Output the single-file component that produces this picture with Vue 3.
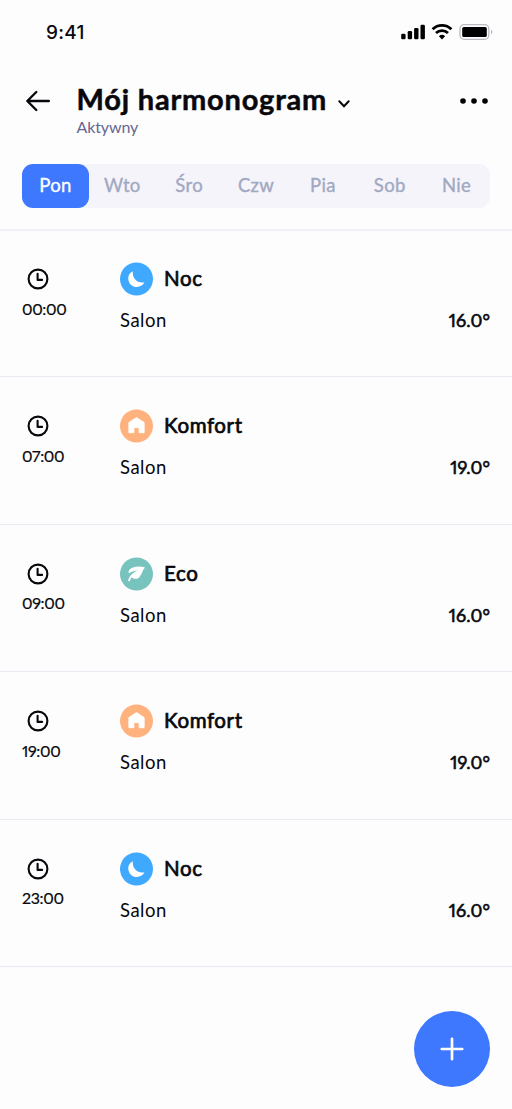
<script setup>
const days = ['Pon', 'Wto', 'Śro', 'Czw', 'Pia', 'Sob', 'Nie']
const entries = [
  { time: '00:00', mode: 'Noc', kind: 'night', temp: '16.0°' },
  { time: '07:00', mode: 'Komfort', kind: 'comfort', temp: '19.0°' },
  { time: '09:00', mode: 'Eco', kind: 'eco', temp: '16.0°' },
  { time: '19:00', mode: 'Komfort', kind: 'comfort', temp: '19.0°' },
  { time: '23:00', mode: 'Noc', kind: 'night', temp: '16.0°' },
]
</script>

<template>
  <main class="screen">
    <div class="status">
      <span class="clock">9:41</span>
      <svg class="status-icons" width="92" height="18" viewBox="0 0 92 18">
        <rect x="0.2" y="10.8" width="4.4" height="5.4" rx="1.3" />
        <rect x="6.7" y="8" width="4.4" height="8.2" rx="1.3" />
        <rect x="13.1" y="5" width="4.4" height="11.2" rx="1.3" />
        <rect x="19.5" y="1.7" width="4.4" height="14.5" rx="1.3" />
        <g fill="none" stroke="#000" stroke-width="2.7">
          <path d="M31.6 6.3a13.4 13.4 0 0 1 18.8 0" />
          <path d="M35 10a8.6 8.6 0 0 1 12 0" />
        </g>
        <path d="M41 16.4l-3.1-3.1a4.5 4.5 0 0 1 6.2 0z" />
        <rect x="59" y="1.7" width="28.8" height="14.6" rx="4" fill="#fff" stroke="#b9b9c0" stroke-width="1.3" />
        <rect x="61.2" y="4" width="24.6" height="10" rx="1.6" />
        <path d="M90.2 6.8c1.6.8 1.6 3.600 0 4.400z" fill="#a6a6ae" />
      </svg>
    </div>

    <header class="header">
      <svg class="back" width="26" height="24" viewBox="0 0 26 24">
        <path d="M23.8 12H2.5M11.3 3L2.3 12l9 9" />
      </svg>
      <div class="heading">
        <h1>
          <span class="title">Mój harmonogram</span>
          <svg width="14" height="10" viewBox="0 0 14 10"><path d="M2.3 2.2L7 7.2l4.7-5" /></svg>
        </h1>
        <p>Aktywny</p>
      </div>
      <svg class="more" width="30" height="8" viewBox="0 0 30 8">
        <circle cx="3" cy="4" r="2.800" /><circle cx="14" cy="4" r="2.800" /><circle cx="25" cy="4" r="2.800" />
      </svg>
    </header>

    <nav class="days">
      <span v-for="(day, i) in days" :key="day" class="day" :class="{ active: i === 0 }">{{ day }}</span>
    </nav>

    <section class="list">
      <article v-for="entry in entries" :key="entry.time" class="row">
        <div class="when">
          <svg width="22" height="22" viewBox="0 0 22 22">
            <circle cx="11" cy="11" r="9.4" />
            <path d="M10.6 5.8v6.1h4.500" />
          </svg>
          <span>{{ entry.time }}</span>
        </div>
        <div class="what">
          <div class="mode">
            <svg width="34" height="34" viewBox="0 0 34 34">
              <template v-if="entry.kind === 'night'">
                <circle cx="16.5" cy="17" r="16.5" fill="#3fa9ff" />
                <path fill="#fff" d="M12.900 9.200C9.400 10.700 7.900 13.900 8.300 17.200C8.700 21.800 12.500 25.200 17 25C20.400 24.800 23.200 23 24.400 20.200C17.900 21.600 11.900 16.500 12.900 9.200Z" />
              </template>
              <template v-else-if="entry.kind === 'comfort'">
                <circle cx="16.5" cy="17" r="16.5" fill="#ffb27d" />
                <path fill="#fff" stroke="#fff" stroke-linejoin="round" d="M16.500 8.600L24.100 13.600V23.700H19.200V18.600H13.800V23.700H8.900V13.600Z" />
              </template>
              <template v-else>
                <circle cx="16.5" cy="17" r="16.5" fill="#77c3bd" />
                <path fill="#fff" d="M25 10.500C19.200 8.600 11.700 9.500 9.100 13.200C8.400 14.300 8.600 15.600 9 16.600C11.700 14.200 15.200 13.500 18 13.500C12.500 15.300 9 19.300 8 24.100L9.900 24.300C10.300 22.600 10.900 21.200 11.700 20.200C14.200 22.500 17.900 22.300 20.200 19.500L19.400 19.100L20.900 18.300C22.200 16 22.400 12.900 25 10.500Z" />
              </template>
            </svg>
            <strong>{{ entry.mode }}</strong>
          </div>
          <div class="zone">
            <span>Salon</span>
            <b>{{ entry.temp }}</b>
          </div>
        </div>
      </article>
    </section>

    <button class="add" aria-label="Dodaj">
      <svg width="24" height="24" viewBox="0 0 24 24"><path d="M12 1.800v20.400M1.800 12h20.400" /></svg>
    </button>
  </main>
</template>

<style>
body {
  background: #fdfdfe;
}
</style>

<style scoped>
.screen {
  box-sizing: border-box;
  position: relative;
  width: 512px;
  height: 1109px;
  overflow: hidden;
  background: #fdfdfe;
  color: #08080c;
  font-family: Lato, "Open Sans", sans-serif;
}
.status {
  display: flex;
  justify-content: space-between;
  align-items: center;
  height: 64px;
  padding: 0 19px 0 46px;
}
.clock {
  padding-top: 1px;
  font: 500 19px/24px Inter, sans-serif;
  letter-spacing: 0.3px;
}
.header {
  display: flex;
  height: 100px;
  padding: 0 22px 0 25px;
}
.back {
  margin-top: 25px;
  fill: none;
  stroke: #08080c;
  stroke-width: 2.4;
  stroke-linecap: round;
  stroke-linejoin: round;
}
.heading {
  flex: 1;
  padding-left: 25.5px;
}
h1 {
  display: flex;
  align-items: center;
  gap: 9.5px;
  margin: 17px 0 0;
  font-size: 29px;
  line-height: 36px;
  font-weight: 700;
  letter-spacing: 0.8px;
  -webkit-text-stroke: 0.5px #08080c;
}
h1 svg {
  margin-top: 9px;
  fill: none;
  stroke: #08080c;
  stroke-width: 2;
  stroke-linecap: round;
}
p {
  margin: 0;
  color: #68668f;
  font-size: 16px;
  line-height: 20px;
  letter-spacing: -0.1px;
}
.more {
  margin-top: 33px;
}
.days {
  display: flex;
  height: 44px;
  margin: 0 22px;
  border-radius: 11px;
  background: #f5f4fa;
}
.day {
  flex: 1;
  border-radius: 11px;
  color: #a1a8c3;
  font-size: 18.5px;
  line-height: 42px;
  font-weight: 400;
  letter-spacing: 0.3px;
  -webkit-text-stroke: 0.35px currentColor;
  text-align: center;
}
.day.active {
  background: #3d78ff;
  color: #fff;
}
.list {
  margin-top: 21px;
  border-top: 2px solid #f0f0f7;
}
.row {
  box-sizing: border-box;
  display: flex;
  height: 147.4px;
  padding: 32px 22px 0;
  border-bottom: 1px solid #e9eaf1;
}
.row:first-child {
  margin-top: -1px;
}
.when {
  width: 98px;
  padding-top: 6px;
}
.when svg {
  display: block;
  margin-left: 5px;
  fill: none;
  stroke: #08080c;
  stroke-width: 2.1;
  stroke-linecap: round;
  stroke-linejoin: round;
}
.when span {
  display: block;
  margin-top: 8.5px;
  font-size: 16px;
  line-height: 20px;
  font-variant-numeric: proportional-nums;
  letter-spacing: -0.35px;
  -webkit-text-stroke: 0.2px #08080c;
}
.what {
  flex: 1;
}
.mode {
  display: flex;
  align-items: center;
  gap: 10px;
  height: 34px;
}
.mode strong {
  margin-top: -2px;
  font-size: 20.5px;
  font-weight: 400;
  letter-spacing: 0.6px;
  -webkit-text-stroke: 0.7px #08080c;
}
.zone {
  display: flex;
  justify-content: space-between;
  margin-top: 12px;
  font-size: 18.5px;
  line-height: 24px;
  letter-spacing: 0.5px;
}
.zone b {
  font-size: 18px;
  font-weight: 400;
  font-variant-numeric: proportional-nums;
  letter-spacing: 0.1px;
  -webkit-text-stroke: 0.6px #08080c;
}
.add {
  position: absolute;
  right: 22px;
  bottom: 22px;
  display: grid;
  place-items: center;
  width: 76.5px;
  height: 76.5px;
  padding: 0;
  border: 0;
  border-radius: 50%;
  background: #3d78ff;
}
.add svg {
  fill: none;
  stroke: #fff;
  stroke-width: 2.700;
  stroke-linecap: round;
}
</style>
